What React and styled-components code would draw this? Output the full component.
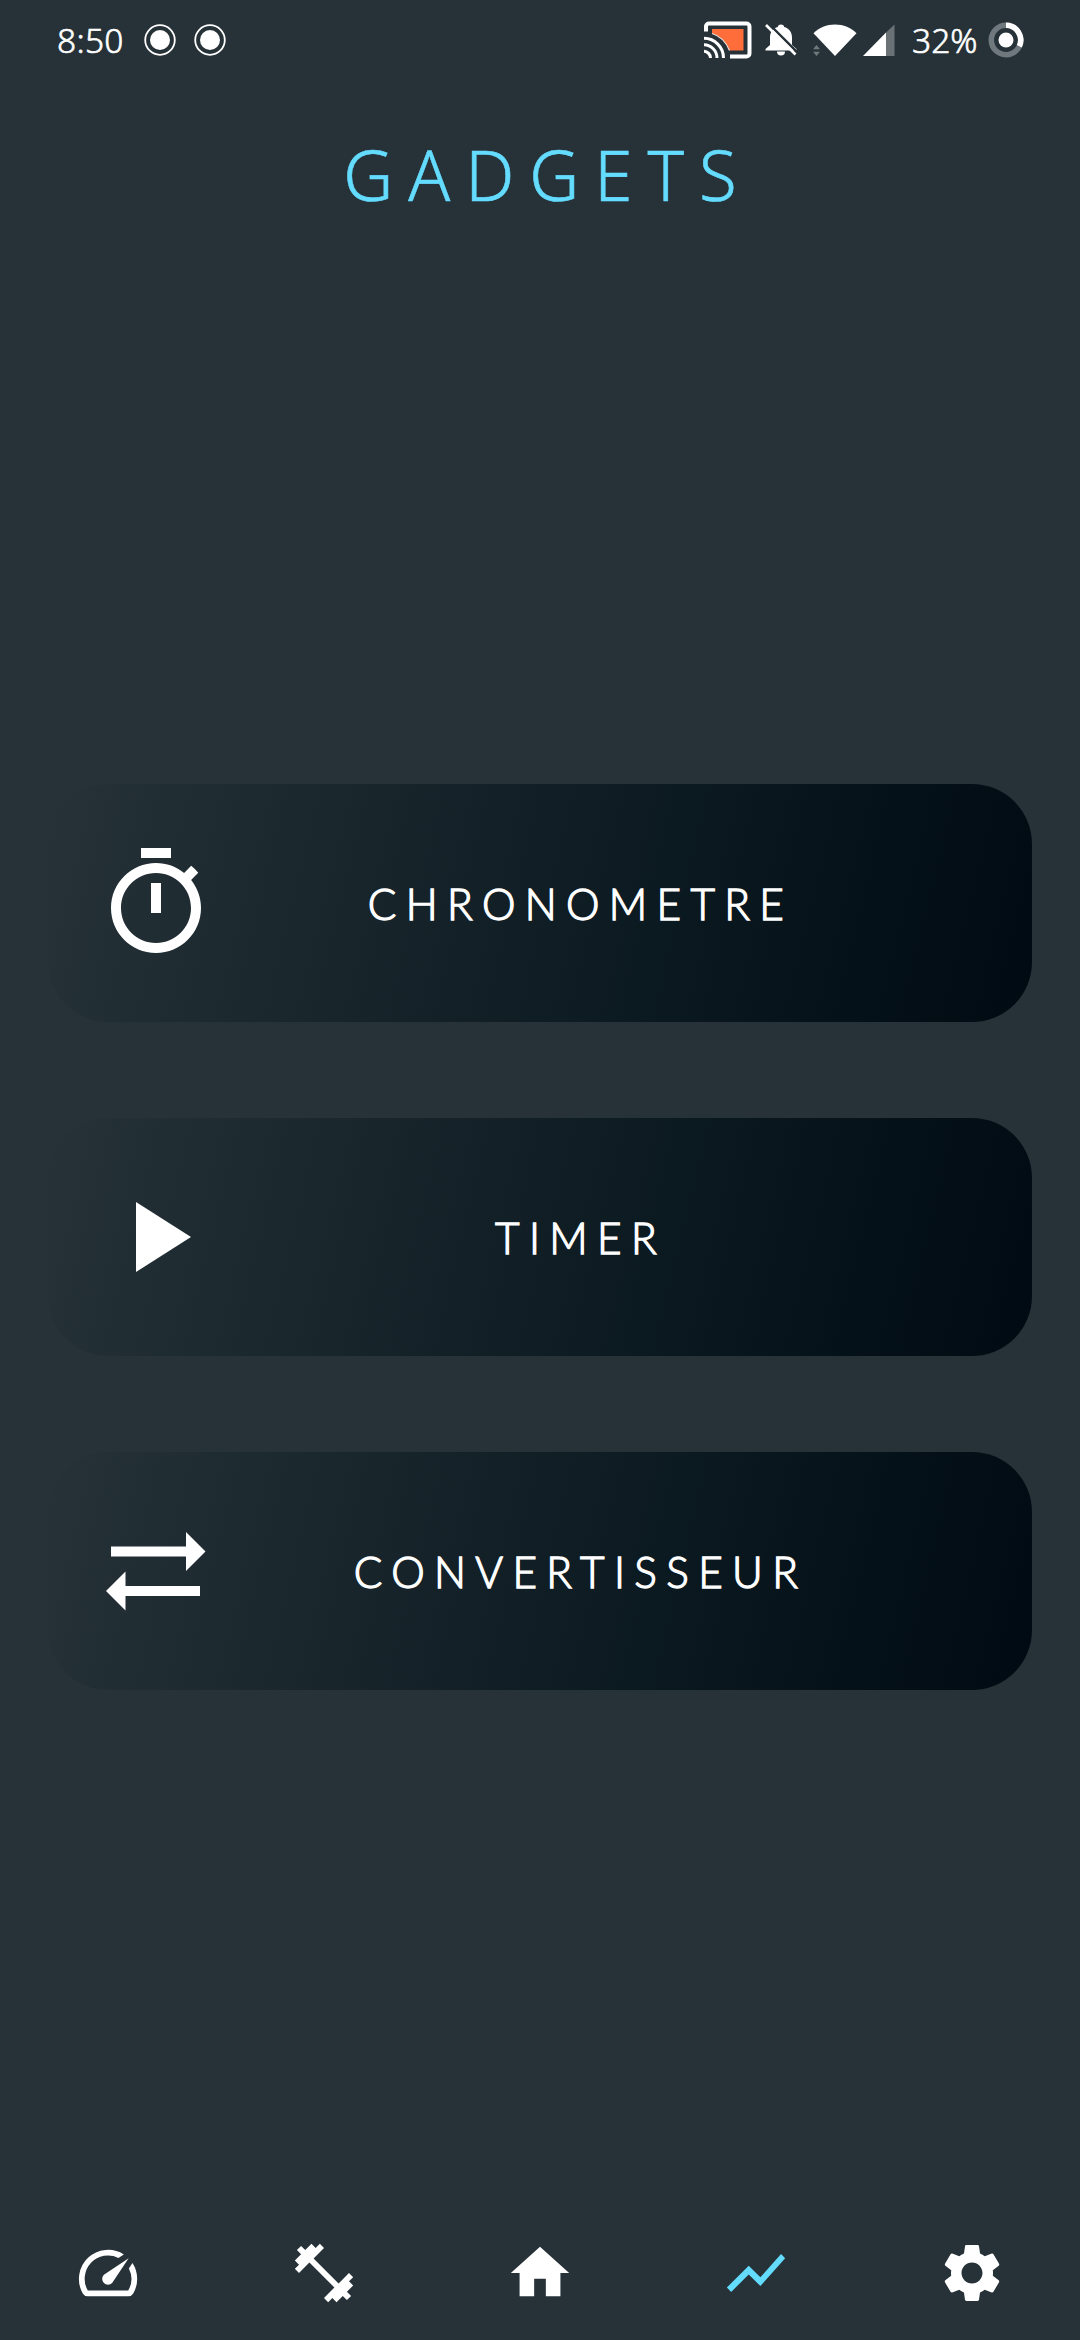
import React from 'react';
import styled, { createGlobalStyle } from 'styled-components';
import {
  MdSpeed,
  MdFitnessCenter,
  MdHome,
  MdShowChart,
  MdSettings,
  MdPlayArrow,
} from 'react-icons/md';

const GlobalStyle = createGlobalStyle`
  * { box-sizing: border-box; }
  body { margin: 0; background: #263238; color: #fff; }
`;

const Screen = styled.div`
  display: flex;
  flex-direction: column;
  width: 1080px;
  height: 2340px;
  overflow: hidden;
  background: #263238;
`;

const StatusBar = styled.header`
  display: flex;
  align-items: center;
  justify-content: space-between;
  height: 80px;
  padding: 0 56px 0 57px;
  font: 300 33.5px/80px "Noto Sans", "Open Sans", sans-serif;
  -webkit-text-stroke: 0.6px #fff;
`;

const StatusGroup = styled.div`
  display: flex;
  align-items: center;
`;

const StatusIcon = styled.svg`
  display: block;
  flex: none;
  margin-left: ${(p) => p.$gap}px;
`;

const StatusText = styled.span`
  width: ${(p) => p.$width}px;
  margin-left: ${(p) => p.$gap || 0}px;
  letter-spacing: ${(p) => p.$spacing || 0}px;
  white-space: nowrap;
`;

const TitleBar = styled.div`
  display: flex;
  justify-content: center;
  height: 188px;
  padding-top: 44px;
`;

const Title = styled.h1`
  margin: 0;
  font: 300 69px/100px "Noto Sans", "Open Sans", sans-serif;
  letter-spacing: 15px;
  margin-right: -15px;
  color: #64dcff;
  -webkit-text-stroke: 0.6px #64dcff;
`;

const Main = styled.main`
  display: flex;
  flex: 1;
  flex-direction: column;
  justify-content: center;
  gap: 96px;
  padding: 0 48px;
`;

const Card = styled.button`
  display: flex;
  align-items: center;
  height: 238px;
  padding: 0 87px 0 48px;
  border: 0;
  border-radius: 60px;
  color: #fff;
  background: linear-gradient(103.6deg, #263238, #0b1920 62%, #000a12);
`;

const CardIcon = styled.span`
  display: flex;
  flex: none;
  width: 120px;
  height: 120px;

  svg { width: 120px; height: 120px; }
`;

const CardLabel = styled.span`
  flex: 1;
  padding-top: 2px;
  text-align: center;
  font: 300 42.3px/60px Lato, "Open Sans", sans-serif;
  letter-spacing: 9.35px;
  white-space: nowrap;
  -webkit-text-stroke: 1.3px #fff;
`;

const NavBar = styled.nav`
  display: grid;
  grid-template-columns: repeat(5, 1fr);
  height: 134px;
`;

const NavItem = styled.button`
  display: flex;
  align-items: center;
  justify-content: center;
  padding: 0;
  border: 0;
  background: none;
  color: ${(p) => (p.$active ? '#64dcff' : '#fff')};

  svg { width: 70px; height: 70px; }
`;

const RecordIcon = ({ gap }) => (
  <StatusIcon $gap={gap} width="34" height="34" viewBox="0 0 34 34">
    <circle cx="17" cy="17" r="14.8" fill="none" stroke="#fff" strokeWidth="1.8" />
    <circle cx="17" cy="17" r="10" fill="#fff" />
  </StatusIcon>
);

const CastIcon = () => (
  <StatusIcon $gap={0} width="48" height="38" viewBox="0 0 48 38">
    <path d="M2 10.5V5.5a3 3 0 0 1 3-3h37.5a3 3 0 0 1 3 3v27a3 3 0 0 1-3 3H26" fill="none" stroke="#fff" strokeWidth="4" />
    <path d="M8 8h31.5v21.5H25.5C22 21 16.5 15 8 12.5z" fill="#ff6d3a" />
    <path d="M8 12.5C16.5 15 22 21 25.5 29.5" fill="none" stroke="#e8e0dc" strokeWidth="1.2" />
    <g fill="none" stroke="#fff" strokeWidth="3">
      <path d="M0 17.3A19.7 19.7 0 0 1 19.5 37" />
      <path d="M0 23.8A13.2 13.2 0 0 1 13 37" />
      <path d="M0 30.3A6.7 6.7 0 0 1 6.5 37" />
    </g>
  </StatusIcon>
);

const BellOffIcon = () => (
  <StatusIcon $gap={12} width="34" height="34" viewBox="0 0 34 34">
    <path d="M17 1.5c1.9 0 3.2 1.2 3.2 2.6C25 5.5 28 9 28 14.5V22l4.5 4v1.5H1.5V26L6 22v-7.5C6 9 9 5.5 13.8 4.1c0-1.4 1.3-2.6 3.2-2.6z" fill="#fff" />
    <path d="M13 28.5h8a4 4 0 0 1-8 0z" fill="#fff" />
    <path d="M4 0 35 31" stroke="#263238" strokeWidth="2.4" />
    <path d="M2 2 31.5 31.5" stroke="#fff" strokeWidth="2.6" />
  </StatusIcon>
);

const WifiIcon = () => (
  <StatusIcon $gap={15} width="44" height="34" viewBox="0 0 44 34">
    <path d="M22 33 .5 10.3C6 4.5 13.5 1.5 22 1.5S38 4.5 43.5 10.3z" fill="#fff" />
    <path d="M0 26.2 3.5 22 7 26.2zM0 28.7 3.5 33 7 28.7z" fill="#6f787b" />
  </StatusIcon>
);

const SignalIcon = () => (
  <StatusIcon $gap={6} width="32" height="34" viewBox="0 0 32 34">
    <path d="M31.5 1.5V33H23V9.5z" fill="#6a7276" />
    <path d="M0 33 23 9.5V33z" fill="#fff" />
  </StatusIcon>
);

const BatteryIcon = () => (
  <StatusIcon $gap={10} width="36" height="36" viewBox="0 0 36 36">
    <circle cx="18" cy="18" r="14.7" fill="none" stroke="#6f787d" strokeWidth="5.6" />
    <path d="M18 3.3A14.7 14.7 0 0 1 31.3 24.3" fill="none" stroke="#fff" strokeWidth="5.6" />
    <circle cx="18" cy="18" r="7.5" fill="#fff" />
  </StatusIcon>
);

const TimerIcon = () => (
  <svg viewBox="0 0 24 24" fill="currentColor">
    <path d="M15 1H9v2h6V1zm-4 13h2V8h-2v6zm8.03-6.61 1.42-1.42c-.43-.51-.9-.99-1.41-1.41l-1.42 1.42C16.07 4.74 14.12 4 12 4c-4.97 0-9 4.03-9 9s4.02 9 9 9 9-4.03 9-9c0-2.12-.74-4.07-1.97-5.61zM12 20c-3.87 0-7-3.13-7-7s3.13-7 7-7 7 3.13 7 7-3.13 7-7 7z" />
  </svg>
);

const SwapIcon = () => (
  <svg viewBox="0 0 24 24" fill="currentColor">
    <path d="M21.9 8.1l-3.9-3.9V7.1H3v2h15v2.9zM2 16l3.9 3.9V17h14.9v-2H5.9v-2.9z" />
  </svg>
);

const gadgets = [
  { label: 'CHRONOMETRE', Icon: TimerIcon },
  { label: 'TIMER', Icon: MdPlayArrow },
  { label: 'CONVERTISSEUR', Icon: SwapIcon },
];

const tabs = [
  { name: 'speed', Icon: MdSpeed },
  { name: 'training', Icon: MdFitnessCenter },
  { name: 'home', Icon: MdHome },
  { name: 'gadgets', Icon: MdShowChart, active: true },
  { name: 'settings', Icon: MdSettings },
];

export default function App() {
  return (
    <Screen>
      <GlobalStyle />
      <StatusBar>
        <StatusGroup>
          <StatusText $width={67} $spacing={0.3}>8:50</StatusText>
          <RecordIcon gap={19} />
          <RecordIcon gap={16} />
        </StatusGroup>
        <StatusGroup>
          <CastIcon />
          <BellOffIcon />
          <WifiIcon />
          <SignalIcon />
          <StatusText $width={66} $gap={17}>32%</StatusText>
          <BatteryIcon />
        </StatusGroup>
      </StatusBar>
      <TitleBar>
        <Title>GADGETS</Title>
      </TitleBar>
      <Main>
        {gadgets.map(({ label, Icon }) => (
          <Card key={label}>
            <CardIcon><Icon /></CardIcon>
            <CardLabel>{label}</CardLabel>
          </Card>
        ))}
      </Main>
      <NavBar>
        {tabs.map(({ name, Icon, active }) => (
          <NavItem key={name} $active={active}><Icon /></NavItem>
        ))}
      </NavBar>
    </Screen>
  );
}
